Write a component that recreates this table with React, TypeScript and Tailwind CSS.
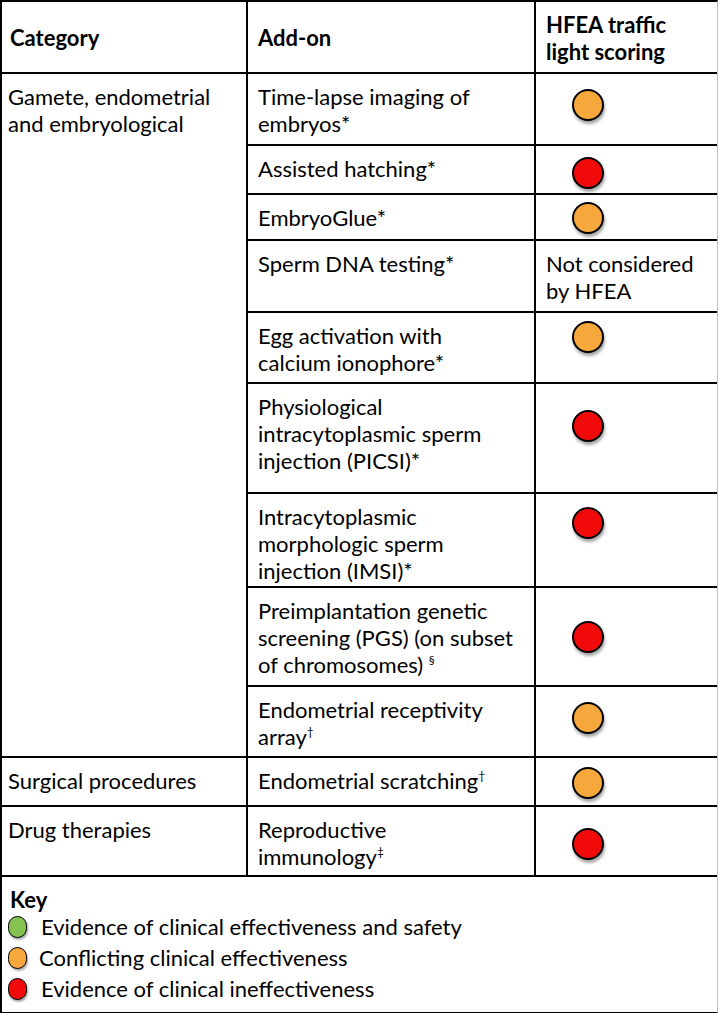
import React from "react";

type Light = "orange" | "red" | "none";

type Row = {
  addon: React.ReactNode;
  light: Light;
  offset: string;
  note?: React.ReactNode;
};

const sup = (s: string) => <span className="relative -top-[9px] text-[12px] leading-none text-black">{s}</span>;

const gameteRows: Row[] = [
  { addon: <>Time-lapse imaging of<br />embryos*</>, light: "orange", offset: "mt-[15px]" },
  { addon: <>Assisted hatching*</>, light: "red", offset: "mt-[11px]" },
  { addon: <>EmbryoGlue*</>, light: "orange", offset: "mt-[7px]" },
  { addon: <>Sperm DNA testing*</>, light: "none", offset: "", note: <>Not considered<br />by HFEA</> },
  { addon: <>Egg activation with<br />calcium ionophore*</>, light: "orange", offset: "mt-[8px]" },
  { addon: <>Physiological<br />intracytoplasmic sperm<br />injection (PICSI)*</>, light: "red", offset: "mt-[26px]" },
  { addon: <>Intracytoplasmic<br />morphologic sperm<br />injection (IMSI)*</>, light: "red", offset: "mt-[13px]" },
  { addon: <>Preimplantation genetic<br />screening (PGS) (on subset<br />of chromosomes) {sup("§")}</>, light: "red", offset: "mt-[33px]" },
  { addon: <>Endometrial receptivity<br />array{sup("†")}</>, light: "orange", offset: "mt-[15px]" },
];

function Dot({ color, className = "" }: { color: Light; className?: string }) {
  const fill = color === "red" ? "bg-[#f20a0a]" : "bg-[#f7a83c]";
  return (
    <div
      className={`w-[32px] h-[32px] rounded-full border-2 border-black ${fill} shadow-[1px_3px_3px_rgba(0,0,0,0.35)] ${className}`}
    />
  );
}

function KeyDot({ fill }: { fill: string }) {
  return (
    <div className={`w-[19px] h-[22px] rounded-full border-[1.5px] border-black ${fill} shadow-[1px_2px_2px_rgba(0,0,0,0.35)]`} />
  );
}

const cell = "border-r-2 border-b-2 border-black";
const last = "border-b-2 border-black";

export default function App() {
  return (
    <div className="w-[718px] h-[1013px] bg-white text-black font-['Lato',sans-serif] text-[22px] leading-[27px]">
      <div className="grid grid-cols-[246px_288px_1fr] grid-rows-[72px_72px_49px_46px_72px_71px_110px_94px_99px_71px_49px_70px] border-l-2 border-t-2 border-r border-black border-r-[#bdbdbd]">
        <div className={`${cell} pl-[8px] pt-[22px] font-bold`}>Category</div>
        <div className={`${cell} pl-[10px] pt-[22px] font-bold`}>Add-on</div>
        <div className={`${last} pl-[10px] pt-[9px] font-bold`}>HFEA traffic<br />light scoring</div>

        <div className={`${cell} row-span-9 pl-[6px] pt-[9px]`}>Gamete, endometrial<br />and embryological</div>
        {gameteRows.map((r, i) => (
          <React.Fragment key={i}>
            <div className={`${cell} pl-[10px] pt-[9px]`}>{r.addon}</div>
            <div className={`${last} pl-[36px]`}>
              {r.light === "none" ? (
                <div className="-ml-[26px] pt-[9px]">{r.note}</div>
              ) : (
                <Dot color={r.light} className={r.offset} />
              )}
            </div>
          </React.Fragment>
        ))}

        <div className={`${cell} pl-[6px] pt-[9px]`}>Surgical procedures</div>
        <div className={`${cell} pl-[10px] pt-[9px]`}>Endometrial scratching{sup("†")}</div>
        <div className={`${last} pl-[36px]`}>
          <Dot color="orange" className="mt-[9px]" />
        </div>

        <div className={`${cell} pl-[6px] pt-[9px]`}>Drug therapies</div>
        <div className={`${cell} pl-[10px] pt-[9px]`}>Reproductive<br />immunology{sup("‡")}</div>
        <div className={`${last} pl-[36px]`}>
          <Dot color="red" className="mt-[21px]" />
        </div>
      </div>

      <div className="h-[137px] border-l-2 border-b-2 border-black border-r border-r-[#bdbdbd] pl-[6px] pt-[9px]">
        <div className="font-bold pl-[2px] leading-[27px]">Key</div>
        <div className="flex flex-col gap-[4px] leading-[27px]">
          <div className="flex items-center gap-[14px]">
            <KeyDot fill="bg-[#86c24f]" />
            <span>Evidence of clinical effectiveness and safety</span>
          </div>
          <div className="flex items-center gap-[12px]">
            <KeyDot fill="bg-[#f7a83c]" />
            <span>Conflicting clinical effectiveness</span>
          </div>
          <div className="flex items-center gap-[14px]">
            <KeyDot fill="bg-[#f20a0a]" />
            <span>Evidence of clinical ineffectiveness</span>
          </div>
        </div>
      </div>
    </div>
  );
}
